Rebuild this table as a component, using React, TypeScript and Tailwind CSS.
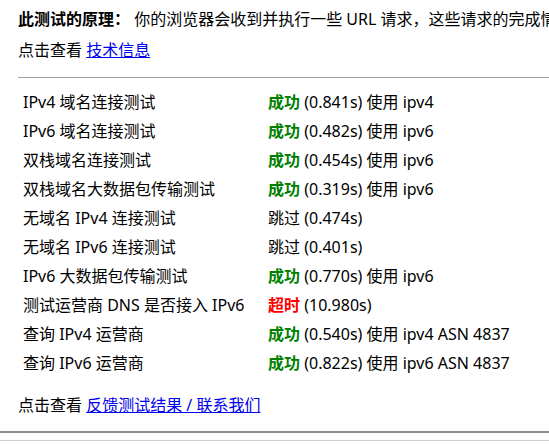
const rows: { name: string; status: 'ok' | 'skip' | 'timeout'; time: string; extra?: string }[] = [
  { name: 'IPv4 域名连接测试', status: 'ok', time: '0.841s', extra: '使用 ipv4' },
  { name: 'IPv6 域名连接测试', status: 'ok', time: '0.482s', extra: '使用 ipv6' },
  { name: '双栈域名连接测试', status: 'ok', time: '0.454s', extra: '使用 ipv6' },
  { name: '双栈域名大数据包传输测试', status: 'ok', time: '0.319s', extra: '使用 ipv6' },
  { name: '无域名 IPv4 连接测试', status: 'skip', time: '0.474s' },
  { name: '无域名 IPv6 连接测试', status: 'skip', time: '0.401s' },
  { name: 'IPv6 大数据包传输测试', status: 'ok', time: '0.770s', extra: '使用 ipv6' },
  { name: '测试运营商 DNS 是否接入 IPv6', status: 'timeout', time: '10.980s' },
  { name: '查询 IPv4 运营商', status: 'ok', time: '0.540s', extra: '使用 ipv4 ASN 4837' },
  { name: '查询 IPv6 运营商', status: 'ok', time: '0.822s', extra: '使用 ipv6 ASN 4837' },
]

function Status({ status }: { status: 'ok' | 'skip' | 'timeout' }) {
  if (status === 'ok') {
    return <span className="font-bold text-[#008000]">成功</span>
  }
  if (status === 'timeout') {
    return <span className="font-bold text-[#ff0000]">超时</span>
  }
  return <span>跳过</span>
}

export default function App() {
  return (
    <div className="h-[445px] w-[549px] overflow-hidden bg-white text-[16px] text-black [font-family:'Noto_Sans','Noto_Sans_CJK_SC',sans-serif]">
      {/* page is wider than the window, so content runs past the right edge */}
      <div className="pl-[18px] pt-[8px]">
        <p className="whitespace-nowrap leading-[22px]">
          <b>此测试的原理：</b> 你的浏览器会收到并执行一些 URL 请求，这些请求的完成情况将显示在下方。
        </p>
        <p className="mt-[9px] leading-[22px]">
          点击查看 <a className="text-[#0000ee] underline">技术信息</a>
        </p>
        <div className="mt-[16px] border-t border-[#a0a0a0]" />
        <div className="mt-[9px]">
          {rows.map((row) => (
            <div key={row.name} className="flex h-[29px] items-center whitespace-nowrap">
              <div className="w-[250px] pl-[5px]">{row.name}</div>
              <div>
                <Status status={row.status} /> ({row.time}){row.extra ? ` ${row.extra}` : ''}
              </div>
            </div>
          ))}
        </div>
        <p className="mt-[17px] leading-[22px]">
          点击查看 <a className="text-[#0000ee] underline">反馈测试结果 / 联系我们</a>
        </p>
      </div>
      <div className="mt-[15px] border-t-2 border-[#8c8c8c]" />
      <div className="mt-[7px] border-t border-[#cfcfcf]" />
    </div>
  )
}
